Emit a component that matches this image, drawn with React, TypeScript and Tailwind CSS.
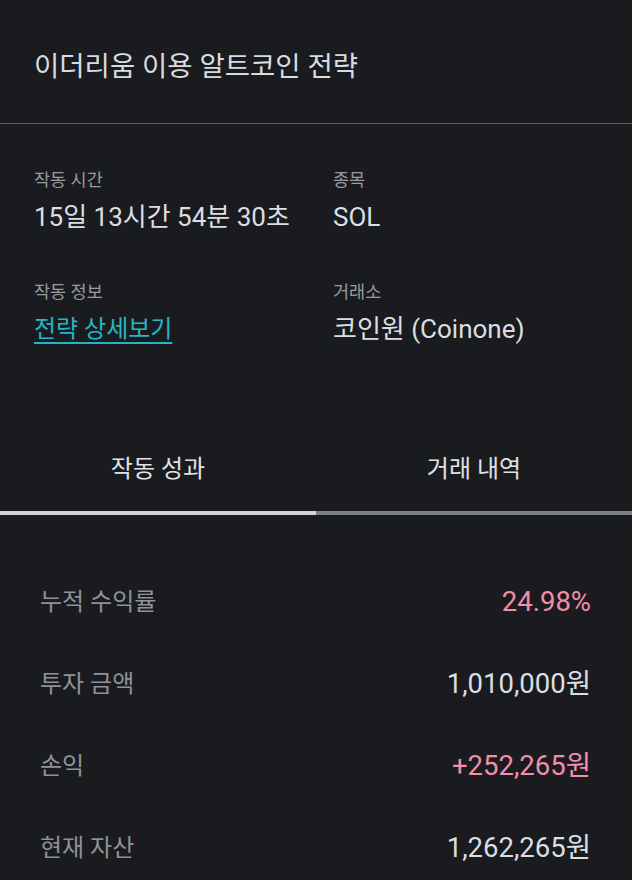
export default function App() {
  const stats = [
    { label: '누적 수익률', value: '24.98%', pink: true },
    { label: '투자 금액', value: '1,010,000원', pink: false },
    { label: '손익', value: '+252,265원', pink: true },
    { label: '현재 자산', value: '1,262,265원', pink: false },
  ];

  return (
    <div className="min-h-[880px] w-full bg-[#1a1b1f] font-['Roboto','Noto_Sans_CJK_KR',sans-serif] text-[#dcdee2]">
      {/* header */}
      <header className="h-[124px] border-b border-[#5c5f65] pl-[34px] pt-[48px]">
        <h1 className="text-[27.5px] leading-[38px] text-[#d8dbe0]">이더리움 이용 알트코인 전략</h1>
      </header>

      {/* info */}
      <section className="grid grid-cols-[299px_1fr] gap-y-[47px] pl-[34px] pt-[44px]">
        <div>
          <div className="text-[17.5px] leading-[24px] text-[#9a9ca1]">작동 시간</div>
          <div className="mt-[9px] text-[26px] leading-[32px]">15일 13시간 54분 30초</div>
        </div>
        <div>
          <div className="text-[17.5px] leading-[24px] text-[#9a9ca1]">종목</div>
          <div className="mt-[9px] text-[26px] leading-[32px]">SOL</div>
        </div>
        <div>
          <div className="text-[17.5px] leading-[24px] text-[#9a9ca1]">작동 정보</div>
          <a
            href="#"
            className="mt-[9px] block w-fit text-[24px] leading-[32px] text-[#25b5c6] underline decoration-2 underline-offset-[5px]"
          >
            전략 상세보기
          </a>
        </div>
        <div>
          <div className="text-[17.5px] leading-[24px] text-[#9a9ca1]">거래소</div>
          <div className="mt-[9px] text-[26px] leading-[32px]">코인원 (Coinone)</div>
        </div>
      </section>

      {/* tabs */}
      <nav className="mt-[108px] grid grid-cols-2">
        <div className="flex flex-col items-center">
          <span className="text-[24px] leading-[32px] text-[#e0e2e6]">작동 성과</span>
          <div className="mt-[26px] h-[4px] w-full bg-[#d2d4d8]" />
        </div>
        <div className="flex flex-col items-center">
          <span className="text-[24px] leading-[32px] text-[#e0e2e6]">거래 내역</span>
          <div className="mt-[26px] h-[4px] w-full bg-[#7b8088]" />
        </div>
      </nav>

      {/* stats */}
      <section className="pt-[46px] pl-[40px] pr-[41px]">
        {stats.map((s) => (
          <div key={s.label} className="flex h-[82px] items-center justify-between">
            <span className="text-[24px] text-[#8f9298]">{s.label}</span>
            <span className={`text-[27.5px] ${s.pink ? 'text-[#f28daa]' : 'text-[#dcdee2]'}`}>{s.value}</span>
          </div>
        ))}
      </section>
    </div>
  );
}
